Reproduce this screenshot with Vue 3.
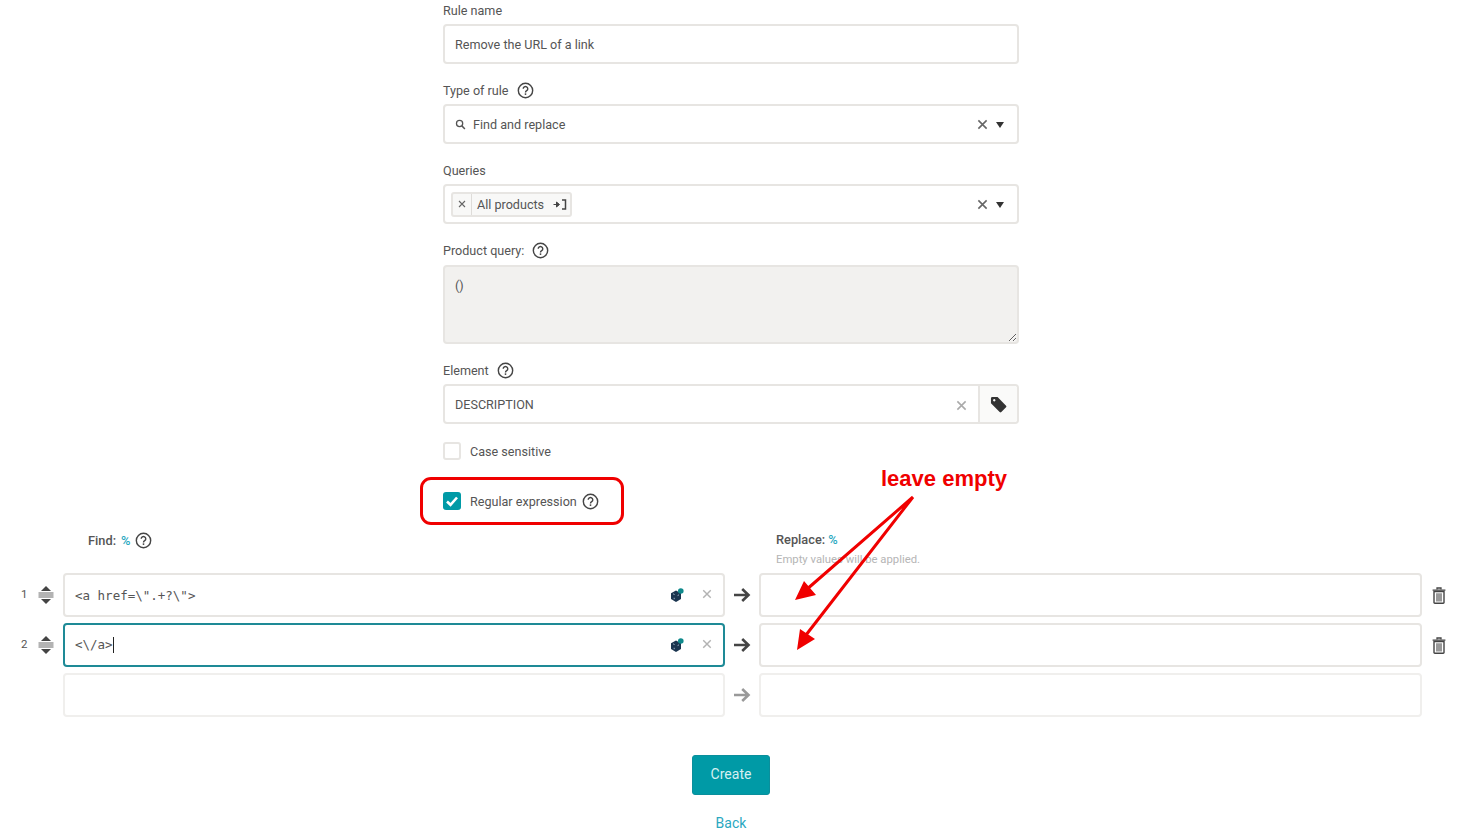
<script setup>
const rows = [
  { n: 1, find: '<a href=\\".+?\\">' },
  { n: 2, find: '<\\/a>', focus: true }
]
</script>

<template>
  <div class="page">
    <svg class="sprite" width="0" height="0" aria-hidden="true">
      <defs>
        <symbol id="help" viewBox="0 0 18 18">
          <circle cx="9" cy="9" r="7.6" fill="none" stroke="#454545" stroke-width="1.5" />
          <path d="M6.6 7.2a2.4 2.4 0 1 1 3.7 2c-.9.6-1.3 1-1.3 1.9" fill="none" stroke="#454545" stroke-width="1.5" />
          <rect x="8.2" y="12" width="1.6" height="1.7" fill="#454545" />
        </symbol>
        <symbol id="x" viewBox="0 0 12 12">
          <path d="M1.5 1.5l9 9M10.5 1.5l-9 9" fill="none" stroke="currentColor" stroke-width="1.7" />
        </symbol>
        <symbol id="sort" viewBox="0 0 16 18">
          <path d="M8 0l5 5H3z" fill="#444" />
          <path d="M8 18l5-5H3z" fill="#444" />
          <path d="M0.5 7h15M0.5 9h15M0.5 11h15" stroke="#9a9a9a" stroke-width="1.3" />
        </symbol>
        <symbol id="cube" viewBox="0 0 14 15">
          <path d="M6 2.6l5 2.700v5.600l-5 3-5-3V5.300z" fill="#1b3550" />
          <path d="M3 5.800l1.600.8M4.200 9.800v1.400M7.600 7.600l1.400-.8" stroke="#9fb1c2" stroke-width="1" />
          <circle cx="10.800" cy="3" r="2.800" fill="#0f8a8c" />
        </symbol>
        <symbol id="arrow" viewBox="0 0 18 16">
          <path d="M1 8h14.500M9.200 2l6.300 6-6.300 6" fill="none" stroke="currentColor" stroke-width="2.600" />
        </symbol>
        <symbol id="trash" viewBox="0 0 14 17">
          <path d="M5 2.200V1h4v1.200M.6 3.200h12.800" fill="none" stroke="#444" stroke-width="1.300" />
          <path d="M2 4.500h10v11a.8.8 0 0 1-.8.8H2.800a.8.8 0 0 1-.8-.8z" fill="none" stroke="#444" stroke-width="1.400" />
          <path d="M5 6.200v8.300M7 6.200v8.300M9 6.200v8.300" stroke="#555" stroke-width="1.200" />
        </symbol>
      </defs>
    </svg>

    <div class="form">
      <div class="field">
        <div class="label">Rule name</div>
        <div class="control"><span class="value">Remove the URL of a link</span></div>
      </div>

      <div class="field">
        <div class="label">Type of rule <svg class="help wide"><use href="#help" /></svg></div>
        <div class="control">
          <svg class="search" viewBox="0 0 12 12">
            <circle cx="5" cy="5" r="3.400" fill="none" stroke="#555" stroke-width="1.400" />
            <path d="M7.500 7.500l3.300 3.300" stroke="#555" stroke-width="1.600" />
          </svg>
          <span class="value after-search">Find and replace</span>
          <svg class="clear dark"><use href="#x" /></svg>
          <span class="caret"></span>
        </div>
      </div>

      <div class="field">
        <div class="label">Queries</div>
        <div class="control chips">
          <div class="chip">
            <span class="chip-x"><svg class="chip-x-icon"><use href="#x" /></svg></span>
            <span class="chip-text">All products</span>
            <svg class="chip-icon" viewBox="0 0 14 11">
              <path d="M0.500 5.500h4M3.500 3l3 2.500-3 2.500z" fill="#444" stroke="#444" stroke-width="1" />
              <path d="M9 1h3.500v9H9" fill="none" stroke="#444" stroke-width="1.500" />
            </svg>
          </div>
          <svg class="clear dark"><use href="#x" /></svg>
          <span class="caret"></span>
        </div>
      </div>

      <div class="field">
        <div class="label area-label">Product query: <svg class="help wide"><use href="#help" /></svg></div>
        <textarea class="area" readonly>()</textarea>
      </div>

      <div class="field">
        <div class="label">Element <svg class="help wide"><use href="#help" /></svg></div>
        <div class="control element">
          <div class="element-main">
            <span class="value">DESCRIPTION</span>
            <svg class="clear light"><use href="#x" /></svg>
          </div>
          <div class="element-tag">
            <svg class="tag" viewBox="0 0 18 18">
              <path d="M1 2.500A1.500 1.500 0 0 1 2.500 1H8l9 9.200a1.300 1.300 0 0 1 0 1.800l-5 5a1.300 1.300 0 0 1-1.800 0L1 7.700zM4.500 3.200a1.300 1.300 0 1 0 .01 0z" fill="#333" fill-rule="evenodd" />
            </svg>
          </div>
        </div>
      </div>

      <label class="check first"><span class="box"></span>Case sensitive</label>
      <label class="check second">
        <span class="box on">
          <svg viewBox="0 0 18 18"><path d="M4 9.500l3.500 3.300L14 5.500" fill="none" stroke="#fff" stroke-width="2.600" /></svg>
        </span>
        Regular expression
        <svg class="help near"><use href="#help" /></svg>
      </label>
    </div>

    <div class="heads">
      <div class="head-find">
        <b>Find:</b> <span class="pct">%</span>
        <svg class="help"><use href="#help" /></svg>
      </div>
      <div class="head-replace">
        <div><b>Replace:</b> <span class="pct">%</span></div>
        <div class="hint">Empty values will be applied.</div>
      </div>
    </div>

    <div class="rows">
      <div v-for="r in rows" :key="r.n" class="row">
        <div class="handle">
          <span class="num">{{ r.n }}</span>
          <svg class="sort"><use href="#sort" /></svg>
        </div>
        <div class="cell find" :class="{ focus: r.focus }">
          <span class="mono">{{ r.find }}<i v-if="r.focus" class="cursor"></i></span>
          <svg class="cube"><use href="#cube" /></svg>
          <svg class="row-x"><use href="#x" /></svg>
        </div>
        <svg class="arrow"><use href="#arrow" /></svg>
        <div class="cell"></div>
        <svg class="trash"><use href="#trash" /></svg>
      </div>
      <div class="row">
        <div class="handle"></div>
        <div class="cell faint"></div>
        <svg class="arrow muted"><use href="#arrow" /></svg>
        <div class="cell faint"></div>
      </div>
    </div>

    <div class="actions">
      <button class="create" type="button">Create</button>
      <a class="back">Back</a>
    </div>

    <!-- Annotation layer drawn over the screenshot -->
    <div class="red-box"></div>
    <div class="note">leave empty</div>
    <svg class="marks" viewBox="0 0 1459 839">
      <path d="M913 497L806 590M913 497L806 635" stroke="#f00000" stroke-width="3" fill="none" />
      <path d="M795 600l9-19 12 14zM797 650l3-21 15 10z" fill="#f00000" />
    </svg>
  </div>
</template>

<style>
html, body { margin: 0; background: #fff; }
</style>

<style scoped>
.page {
  position: relative;
  width: 1459px;
  height: 839px;
  overflow: hidden;
  font-family: Roboto, "Liberation Sans", sans-serif;
  font-size: 12.6px;
  color: #555;
  background: #fff;
}
.sprite { position: absolute; }

.form { width: 576px; margin-left: 443px; }
.field { margin-bottom: 16px; }
.label {
  display: flex;
  align-items: center;
  height: 20px;
  margin-bottom: 4px;
  color: #555;
}
.label.area-label { margin-bottom: 5px; }
.help { width: 17px; height: 17px; flex: none; }
.help.wide { margin-left: 8px; }
.help.near { margin-left: 5px; }

.control {
  display: flex;
  align-items: center;
  box-sizing: border-box;
  height: 40px;
  padding: 0 10px;
  border: 2px solid #e7e5e2;
  border-radius: 4px;
  background: #fff;
}
.value { color: #555; }
.search { width: 11px; height: 11px; flex: none; }
.after-search { margin-left: 7px; }
.clear { width: 11px; height: 11px; flex: none; margin-left: auto; }
.clear.dark { color: #666; }
.clear.light { color: #aaa; margin-right: 1px; margin-top: 2px; }
.caret {
  width: 0;
  height: 0;
  margin: 2px 3px 0 8px;
  border-left: 4.5px solid transparent;
  border-right: 4.5px solid transparent;
  border-top: 6px solid #333;
}
.chips { padding-left: 6px; }
.chip {
  display: flex;
  align-items: center;
  box-sizing: border-box;
  width: 121px;
  height: 25px;
  border: 2px solid #e7e5e2;
  border-radius: 3px;
  background: #f8f8f7;
}
.chip-x {
  display: flex;
  align-items: center;
  justify-content: center;
  width: 18px;
  height: 100%;
  border-right: 1px solid #dedcd9;
}
.chip-x-icon { width: 8px; height: 8px; color: #666; }
.chip-text { margin-left: 5px; }
.chip-icon { width: 14px; height: 11px; margin-left: 9px; }

.area {
  display: block;
  box-sizing: border-box;
  width: 576px;
  height: 79px;
  padding: 11px 10px;
  border: 2px solid #e7e5e2;
  border-radius: 4px;
  background: #f2f1ef;
  font: inherit;
  color: #555;
  outline: none;
  resize: both;
}
.element { padding: 0; }
.element-main {
  display: flex;
  align-items: center;
  flex: 1;
  height: 100%;
  padding: 0 10px;
}
.element-tag {
  display: flex;
  align-items: center;
  justify-content: center;
  box-sizing: border-box;
  width: 39px;
  height: 100%;
  border-left: 2px solid #e7e5e2;
  background: #fafaf9;
  border-radius: 0 3px 3px 0;
}
.tag { width: 17px; height: 17px; }

.check {
  display: flex;
  align-items: center;
  height: 20px;
  color: #555;
}
.check.first { margin-top: 17px; }
.check.second { margin-top: 30px; }
.box {
  display: block;
  box-sizing: border-box;
  width: 18px;
  height: 18px;
  margin-right: 9px;
  border: 2px solid #e7e5e2;
  border-radius: 3px;
  background: #fff;
}
.box.on { border: 0; background: #009aa6; }
.box.on svg { display: block; width: 18px; height: 18px; }

.heads { display: flex; height: 43px; margin-top: 19px; font-size: 12.800px; }
.head-find {
  display: flex;
  align-items: center;
  align-self: flex-start;
  gap: 5px;
  height: 20px;
  width: 688px;
  margin-left: 88px;
}
.head-replace { line-height: 20px; }
.heads b { font-weight: 500; color: #555; }
.pct { color: #2aa8bf; font-weight: 500; }
.hint { color: #b5b5b5; font-size: 11.300px; }

.rows { display: grid; row-gap: 6px; }
.row {
  display: grid;
  grid-template-columns: 63px 662px 34px 663px 34px;
  align-items: center;
  height: 44px;
}
.handle {
  display: flex;
  align-items: center;
  padding-left: 21px;
}
.num { width: 17px; font-size: 11.500px; margin-top: -3px; }
.sort { width: 16px; height: 18px; }
.cell {
  display: flex;
  align-items: center;
  box-sizing: border-box;
  height: 44px;
  padding: 0 11px 0 10px;
  border: 2px solid #e7e5e2;
  border-radius: 4px;
  background: #fff;
}
.cell.faint { border-color: #f0efed; }
.cell.focus { border: 2px solid #1e8a96; }
.mono {
  position: relative;
  font-family: "DejaVu Sans Mono", "Liberation Mono", monospace;
  font-size: 12.500px;
  color: #555;
  white-space: pre;
}
.cursor {
  display: inline-block;
  width: 1px;
  height: 16px;
  background: #222;
  vertical-align: -4px;
}
.cube { width: 14px; height: 15px; margin-left: auto; }
.row-x { width: 10px; height: 10px; margin: -2px 0 0 18px; color: #b3b3b3; }
.arrow { width: 18px; height: 16px; justify-self: center; color: #444; }
.arrow.muted { color: #999; }
.trash { width: 14px; height: 17px; justify-self: center; }

.actions {
  display: flex;
  flex-direction: column;
  align-items: center;
  margin-top: 38px;
  padding-left: 3px;
}
.create {
  width: 78px;
  height: 40px;
  padding-bottom: 3px;
  border: 1px solid #0a8f9c;
  border-radius: 3px;
  background: #009aa6;
  color: #d6f0f2;
  font-family: inherit;
  font-size: 14px;
  cursor: pointer;
}
.back {
  margin-top: 19px;
  color: #2aa8bf;
  font-size: 14px;
  line-height: 18px;
}

.red-box {
  position: absolute;
  left: 420px;
  top: 477px;
  box-sizing: border-box;
  width: 204px;
  height: 48px;
  border: 3px solid #f00000;
  border-radius: 11px;
}
.note {
  position: absolute;
  left: 881px;
  top: 465px;
  font-family: "Liberation Sans", sans-serif;
  font-weight: 700;
  font-size: 22px;
  line-height: 28px;
  color: #f00000;
  white-space: nowrap;
}
.marks {
  position: absolute;
  left: 0;
  top: 0;
  width: 1459px;
  height: 839px;
  pointer-events: none;
}
</style>
